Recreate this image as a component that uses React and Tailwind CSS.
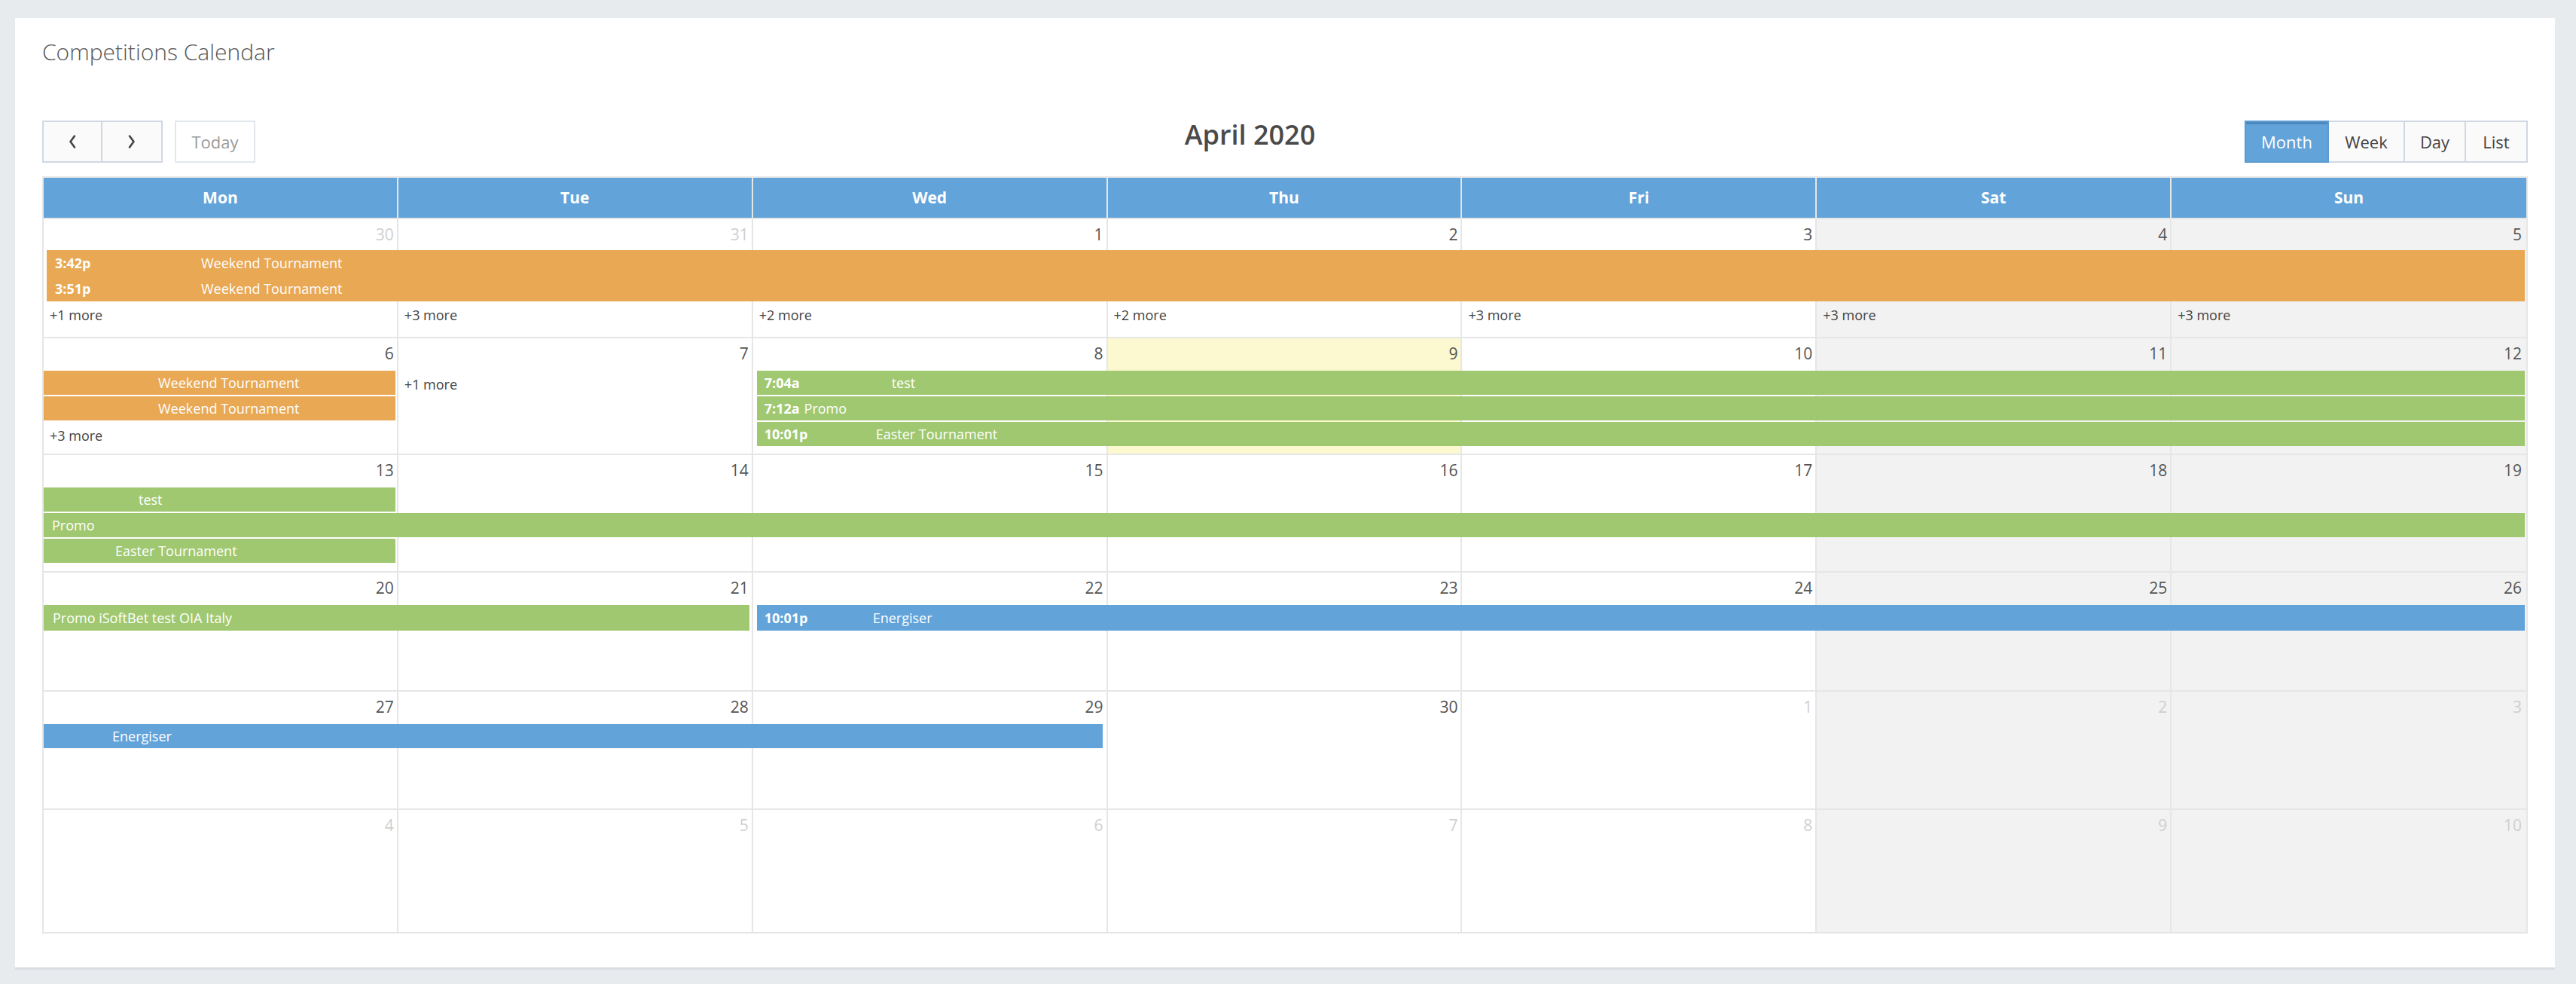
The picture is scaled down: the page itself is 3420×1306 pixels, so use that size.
import React from 'react';

const COL_START = { 1: 'col-start-1', 2: 'col-start-2', 3: 'col-start-3', 4: 'col-start-4', 5: 'col-start-5', 6: 'col-start-6', 7: 'col-start-7' };
const COL_SPAN = { 1: 'col-span-1', 2: 'col-span-2', 3: 'col-span-3', 4: 'col-span-4', 5: 'col-span-5', 6: 'col-span-6', 7: 'col-span-7' };
const ROW_START = { 1: 'row-start-1', 2: 'row-start-2', 3: 'row-start-3', 4: 'row-start-4', 5: 'row-start-5' };

const ORANGE = 'bg-[#e9a854]';
const GREEN = 'bg-[#a0c870]';
const BLUE = 'bg-[#62a3da]';

const weeks = [
  {
    h: 'h-[158px]',
    rows: 'grid-rows-[41px_34px_34px_1fr]',
    days: [[30, true], [31, true], [1], [2], [3], [4], [5]],
    items: [
      { type: 'bar', row: 2, col: 1, span: 7, color: ORANGE, box: 'h-[34px] ml-[4px] mr-[2px]', time: '3:42p', timeW: 'w-[194px]', pl: 'pl-[11px]', title: 'Weekend Tournament' },
      { type: 'bar', row: 3, col: 1, span: 7, color: ORANGE, box: 'h-[34px] ml-[4px] mr-[2px]', time: '3:51p', timeW: 'w-[194px]', pl: 'pl-[11px]', title: 'Weekend Tournament' },
      { type: 'more', row: 4, col: 1, text: '+1 more' },
      { type: 'more', row: 4, col: 2, text: '+3 more' },
      { type: 'more', row: 4, col: 3, text: '+2 more' },
      { type: 'more', row: 4, col: 4, text: '+2 more' },
      { type: 'more', row: 4, col: 5, text: '+3 more' },
      { type: 'more', row: 4, col: 6, text: '+3 more' },
      { type: 'more', row: 4, col: 7, text: '+3 more' },
    ],
  },
  {
    h: 'h-[155px]',
    rows: 'grid-rows-[43px_34px_34px_34px_1fr]',
    today: 4,
    days: [[6], [7], [8], [9], [10], [11], [12]],
    items: [
      { type: 'bar', row: 2, col: 1, span: 1, color: ORANGE, pl: 'pl-[152px]', title: 'Weekend Tournament' },
      { type: 'bar', row: 3, col: 1, span: 1, color: ORANGE, pl: 'pl-[152px]', title: 'Weekend Tournament' },
      { type: 'more', row: 4, col: 1, text: '+3 more' },
      { type: 'more', row: 2, col: 2, text: '+1 more' },
      { type: 'bar', row: 2, col: 3, span: 5, color: GREEN, box: 'h-[32px] ml-[5px] mr-[2px]', time: '7:04a', timeW: 'w-[169px]', pl: 'pl-[10px]', title: 'test' },
      { type: 'bar', row: 3, col: 3, span: 5, color: GREEN, box: 'h-[32px] ml-[5px] mr-[2px]', time: '7:12a', timeW: 'mr-[6px]', pl: 'pl-[10px]', title: 'Promo' },
      { type: 'bar', row: 4, col: 3, span: 5, color: GREEN, box: 'h-[32px] ml-[5px] mr-[2px]', time: '10:01p', timeW: 'w-[148px]', pl: 'pl-[10px]', title: 'Easter Tournament' },
    ],
  },
  {
    h: 'h-[156px]',
    rows: 'grid-rows-[43px_34px_34px_34px_1fr]',
    days: [[13], [14], [15], [16], [17], [18], [19]],
    items: [
      { type: 'bar', row: 2, col: 1, span: 1, color: GREEN, pl: 'pl-[126px]', title: 'test' },
      { type: 'bar', row: 3, col: 1, span: 7, color: GREEN, box: 'h-[32px] ml-0 mr-[2px]', pl: 'pl-[11px]', title: 'Promo' },
      { type: 'bar', row: 4, col: 1, span: 1, color: GREEN, pl: 'pl-[95px]', title: 'Easter Tournament' },
    ],
  },
  {
    h: 'h-[158px]',
    rows: 'grid-rows-[43px_34px_1fr]',
    days: [[20], [21], [22], [23], [24], [25], [26]],
    items: [
      { type: 'bar', row: 2, col: 1, span: 2, color: GREEN, box: 'h-[34px] ml-0 mr-[5px]', pl: 'pl-[12px]', title: 'Promo iSoftBet test OIA Italy' },
      { type: 'bar', row: 2, col: 3, span: 5, color: BLUE, box: 'h-[34px] ml-[5px] mr-[2px]', time: '10:01p', timeW: 'w-[144px]', pl: 'pl-[10px]', title: 'Energiser' },
    ],
  },
  {
    h: 'h-[157px]',
    rows: 'grid-rows-[43px_34px_1fr]',
    days: [[27], [28], [29], [30], [1, true], [2, true], [3, true]],
    items: [
      { type: 'bar', row: 2, col: 1, span: 3, color: BLUE, box: 'h-[32px] ml-0 mr-[7px]', pl: 'pl-[91px]', title: 'Energiser' },
    ],
  },
  {
    h: 'h-[164px]',
    rows: 'grid-rows-[44px_1fr]',
    days: [[4, true], [5, true], [6, true], [7, true], [8, true], [9, true], [10, true]],
    items: [],
  },
];

function Bar({ it }) {
  const box = it.box || 'h-[32px] ml-0 mr-[4px]';
  return (
    <div
      className={`${COL_START[it.col]} ${COL_SPAN[it.span]} ${ROW_START[it.row]} self-start ${box} ${it.color} ${it.pl} flex items-center text-white text-[18px] leading-none whitespace-nowrap overflow-hidden`}
    >
      {it.time && <span className={`font-bold shrink-0 ${it.timeW}`}>{it.time}</span>}
      <span>{it.title}</span>
    </div>
  );
}

function More({ it }) {
  return (
    <div className={`${COL_START[it.col]} ${ROW_START[it.row]} self-start pl-[8px] text-[18px] leading-[36px] text-[#444]`}>
      {it.text}
    </div>
  );
}

function Week({ w }) {
  return (
    <div className={`grid grid-cols-7 ${w.rows} ${w.h} border-b-2 border-[#e6e6e6]`}>
      {w.days.map((d, i) => {
        const col = i + 1;
        let bg = 'bg-white';
        if (w.today === col) bg = 'bg-[#fcf8d0]';
        else if (col >= 6) bg = 'bg-[#f2f2f2]';
        return (
          <div
            key={'bg' + i}
            className={`${COL_START[col]} row-span-full ${bg} ${col < 7 ? 'border-r-2 border-[#e6e6e6]' : ''}`}
          />
        );
      })}
      {w.days.map((d, i) => (
        <div
          key={'n' + i}
          className={`${COL_START[i + 1]} row-start-1 text-right pr-[6px] pt-[6px] text-[21px] leading-[28px] ${d[1] ? 'text-[#cfcfcf]' : 'text-[#555]'}`}
        >
          {d[0]}
        </div>
      ))}
      {w.items.map((it, k) => (it.type === 'bar' ? <Bar key={k} it={it} /> : <More key={k} it={it} />))}
    </div>
  );
}

function Chevron({ dir }) {
  return (
    <svg width="12" height="20" viewBox="0 0 12 20" fill="none">
      {dir === 'left' ? (
        <path d="M9 2.5 L3.5 10 L9 17.5" stroke="#444" strokeWidth="2.6" strokeLinecap="round" strokeLinejoin="round" />
      ) : (
        <path d="M3 2.5 L8.5 10 L3 17.5" stroke="#444" strokeWidth="2.6" strokeLinecap="round" strokeLinejoin="round" />
      )}
    </svg>
  );
}

export default function App() {
  const dayNames = ['Mon', 'Tue', 'Wed', 'Thu', 'Fri', 'Sat', 'Sun'];
  return (
    <div className="min-h-screen bg-[#e7ebee] pt-[24px] pl-[20px] pr-[28px] font-['Open_Sans',sans-serif]">
      <div className="bg-white shadow-[0_3px_0_#d9dee2] px-[36px] pt-[24px] pb-[45px]">
        <div className="text-[30px] font-light leading-[41px] text-[#555]">Competitions Calendar</div>

        <div className="mt-[71px] flex justify-between items-start">
          <div className="flex gap-[16px]">
            <div className="flex h-[56px] border-2 border-[#cfd8e3] bg-[#fafafa]">
              <button className="w-[78px] flex items-center justify-center border-r-2 border-[#cfd8e3]">
                <Chevron dir="left" />
              </button>
              <button className="w-[78px] flex items-center justify-center">
                <Chevron dir="right" />
              </button>
            </div>
            <button className="h-[56px] w-[107px] border-2 border-[#e2e7ee] bg-white text-[22px] text-[#9a9a9a]">Today</button>
          </div>

          <h2 className="-mt-[6px] text-[36px] font-semibold leading-[49px] text-[#4a4a4a]">April 2020</h2>

          <div className="flex h-[56px] text-[22px]">
            <button className="w-[112px] bg-[#62a3da] text-white border-2 border-[#5b9bd2] shadow-[inset_0_3px_0_#4e88bd]">Month</button>
            <button className="w-[101px] bg-[#fafafa] text-[#444] border-y-2 border-r-2 border-[#cfd8e3]">Week</button>
            <button className="w-[81px] bg-[#fafafa] text-[#444] border-y-2 border-r-2 border-[#cfd8e3]">Day</button>
            <button className="w-[82px] bg-[#fafafa] text-[#444] border-y-2 border-r-2 border-[#cfd8e3]">List</button>
          </div>
        </div>

        <div className="mt-[18px] border-x-2 border-t-2 border-[#e6e6e6]">
          <div className="grid grid-cols-7 h-[55px] bg-[#62a3da] border-b-2 border-[#e6e6e6]">
            {dayNames.map((n, i) => (
              <div
                key={n}
                className={`flex items-center justify-center text-white font-bold text-[21px] ${i < 6 ? 'border-r-2 border-[#e6e6e6]' : ''}`}
              >
                {n}
              </div>
            ))}
          </div>
          {weeks.map((w, i) => (
            <Week key={i} w={w} />
          ))}
        </div>
      </div>
    </div>
  );
}
